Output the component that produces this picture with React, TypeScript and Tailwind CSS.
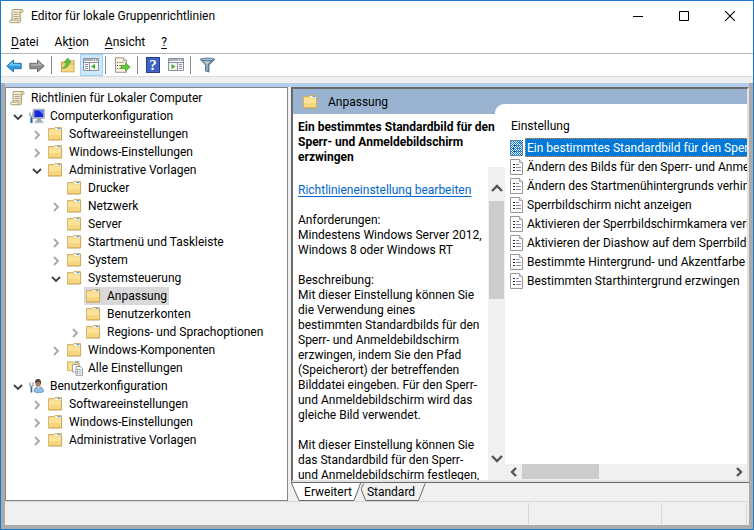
import React from "react";

type IconName = "scroll" | "computer" | "user" | "folder" | "all";

function FolderIcon() {
  return (
    <svg width="16" height="16" viewBox="0 0 16 16" className="shrink-0">
      <path d="M.5 2.500h5.500L7 1.500h6.500v12H.5z" fill="#f4d88e" stroke="#cdab62" strokeWidth=".9" />
      <path d="M7.500 2h5.500v2H7.500z" fill="#fff6dc" />
      <path d="M9.500 2h3v1.200h-3z" fill="#5aa2dc" />
      <path d="M.9 4.200h6l.8.8h5.500v8.500H.9z" fill="#fde299" />
      <path d="M.9 9h12.300v4.500H.9z" fill="#f7d680" />
      <path d="M.3 14h13.400" stroke="#bd9440" strokeWidth=".9" />
      <path d="M13.600 3v11" stroke="#c9a250" strokeWidth=".7" />
    </svg>
  );
}

function ScrollIcon() {
  return (
    <svg width="16" height="16" viewBox="0 0 16 16" className="shrink-0">
      <path d="M3.500 1.500h9.500c1.300 0 1.500 2.600.2 2.800h-1.600v8.700c0 1.300-.8 1.700-1.700 1.700H1.500c-1.300 0-1.300-2.400 0-2.600H3V4z" fill="#f5edcf" stroke="#a2946c" strokeWidth=".9" />
      <path d="M11.600 4.300c-.9-.5-.7-2.400.6-2.600M3 12.100h6.200c-.4.9-.2 1.900.5 2.300" fill="none" stroke="#a2946c" strokeWidth=".8" />
      <path d="M10.600 3v9.500" stroke="#d9ca99" strokeWidth="1.200" />
      <path d="M4.500 4.500h5M4.500 6.500h5M4.500 8.500h5M4.500 10.500h5" stroke="#99958a" strokeWidth=".8" />
    </svg>
  );
}

function ComputerIcon() {
  return (
    <svg width="16" height="16" viewBox="0 0 16 16" className="shrink-0">
      <path d="M4.300 1.300h11v9h-11z" fill="#dfe3e8" stroke="#8791a0" strokeWidth=".8" />
      <path d="M5.300 2.300h9v7h-9z" fill="#1426d6" />
      <path d="M9.500 2.300h4.800v4.500z" fill="#5c8cf4" />
      <path d="M8.500 10.500h3l1.500 3H7z" fill="#9ba3ad" />
      <path d="M6 13.300h8v1.400H6z" fill="#c5cad0" stroke="#8c939d" strokeWidth=".5" />
      <path d="M1 4.500v3l1.400 1.200L4 7.500v-3M2.500 8v2" fill="none" stroke="#8696a8" strokeWidth="1.200" />
      <path d="M1.400 9.500h2.200V15H1.400z" fill="#2c62ad" />
    </svg>
  );
}

function UserIcon() {
  return (
    <svg width="16" height="16" viewBox="0 0 16 16" className="shrink-0">
      <path d="M5 13.500c0-3.500 2-5 4.500-5s5 1.700 5 5c-2.500 1.700-7 1.700-9.500 0z" fill="#8fbbe8" stroke="#5d8bbd" strokeWidth=".7" />
      <path d="M7.800 8.300l1.600 2 1.800-2z" fill="#fff" />
      <ellipse cx="9" cy="5.400" rx="2.600" ry="3.300" fill="#b07a56" />
      <path d="M6.300 5C5.600 1.800 7.600.8 9.300 1c2.400.2 3.200 2.200 2.500 5.700-1-.5-.6-2.600-1.700-3.200z" fill="#4b3f3b" />
      <path d="M1 4.500v3l1.400 1.200L4 7.500v-3" fill="none" stroke="#8696a8" strokeWidth="1.200" />
      <path d="M1.500 9h1.800v5.500H1.500z" fill="#416d9e" />
    </svg>
  );
}

function AllIcon() {
  return (
    <svg width="17" height="16" viewBox="0 0 17 16" className="-mr-px shrink-0">
      <path d="M.5 1.800h6l1 1h4.800v8H.5z" fill="#fbdf92" stroke="#cfae66" strokeWidth=".9" />
      <path d="M8 1.300h4v1.200H8z" fill="#4a9bdd" />
      <path d="M5.500 4.500h5l1.500 1.500v6H5.500z" fill="#fff" stroke="#8d8d8d" strokeWidth=".8" />
      <path d="M9 6.500h4.500l2 2v6.800H9z" fill="#fff" stroke="#7f7f7f" strokeWidth=".8" />
      <path d="M10.300 9.500h1M10.300 11.300h1M10.300 13.200h1" stroke="#333" />
      <path d="M12 9.500h2.300M12 11.300h2.300M12 13.200h2.300" stroke="#8f8fa8" strokeWidth=".8" />
    </svg>
  );
}

const icons: Record<IconName, () => React.ReactElement> = {
  scroll: ScrollIcon,
  computer: ComputerIcon,
  user: UserIcon,
  folder: FolderIcon,
  all: AllIcon,
};

function SettingIcon({ selected }: { selected: boolean }) {
  return (
    <svg width="14" height="16" viewBox="0 0 14 16" className="shrink-0">
      <defs>
        <pattern id="dither" width="2" height="2" patternUnits="userSpaceOnUse">
          <path d="M0 0h1v1H0zM1 1h1v1H1z" fill="#0078d7" />
        </pattern>
      </defs>
      <path d="M.5 .5H9.500L12.500 3.500v12H.5z" fill="#fff" stroke="#979797" />
      <path d="M9.500 .5V3.500H12.500" fill="#e8e8e8" stroke="#a5a5a5" />
      <path d="M3 5h2v1H3zM3 8h2v1H3zM3 11h2v1H3z" fill="#222" />
      <path d="M6 5h3v1H6zM6 8h5v1H6zM6 11h5v1H6z" fill="#8f86a8" />
      {selected && <path d="M0 0h13v16H0z" fill="url(#dither)" />}
    </svg>
  );
}

function Chevron({ open }: { open: boolean }) {
  return (
    <svg width="10" height="10" viewBox="0 0 10 10" className="mt-[2px]">
      {open ? (
        <path d="M1 3l4 4 4-4" fill="none" stroke="#404040" strokeWidth="1.800" />
      ) : (
        <path d="M3 1l4 4-4 4" fill="none" stroke="#a6a6a6" strokeWidth="1.800" />
      )}
    </svg>
  );
}

type Node = { level: number; label: string; icon: IconName; open?: boolean; selected?: boolean };

const tree: Node[] = [
  { level: 0, label: "Richtlinien für Lokaler Computer", icon: "scroll" },
  { level: 1, label: "Computerkonfiguration", icon: "computer", open: true },
  { level: 2, label: "Softwareeinstellungen", icon: "folder", open: false },
  { level: 2, label: "Windows-Einstellungen", icon: "folder", open: false },
  { level: 2, label: "Administrative Vorlagen", icon: "folder", open: true },
  { level: 3, label: "Drucker", icon: "folder" },
  { level: 3, label: "Netzwerk", icon: "folder", open: false },
  { level: 3, label: "Server", icon: "folder" },
  { level: 3, label: "Startmenü und Taskleiste", icon: "folder", open: false },
  { level: 3, label: "System", icon: "folder", open: false },
  { level: 3, label: "Systemsteuerung", icon: "folder", open: true },
  { level: 4, label: "Anpassung", icon: "folder", selected: true },
  { level: 4, label: "Benutzerkonten", icon: "folder" },
  { level: 4, label: "Regions- und Sprachoptionen", icon: "folder", open: false },
  { level: 3, label: "Windows-Komponenten", icon: "folder", open: false },
  { level: 3, label: "Alle Einstellungen", icon: "all" },
  { level: 1, label: "Benutzerkonfiguration", icon: "user", open: true },
  { level: 2, label: "Softwareeinstellungen", icon: "folder", open: false },
  { level: 2, label: "Windows-Einstellungen", icon: "folder", open: false },
  { level: 2, label: "Administrative Vorlagen", icon: "folder", open: false },
];

const indents = ["pl-[2px]", "pl-[2px]", "pl-[21px]", "pl-[40px]", "pl-[59px]"];

function TreeRow({ node }: { node: Node }) {
  const Icon = icons[node.icon];
  return (
    <li role="treeitem" aria-expanded={node.open} aria-selected={!!node.selected} className={`flex h-[18px] ${indents[node.level]}`}>
      {node.level > 0 && (
        <span className="flex w-[19px] shrink-0 items-center justify-center">
          {node.open !== undefined && <Chevron open={node.open} />}
        </span>
      )}
      <button className={`flex items-center gap-[5px] px-[2px] whitespace-nowrap ${node.selected ? "bg-[#d9d9d9]" : ""}`}>
        <Icon />
        <span>{node.label}</span>
      </button>
    </li>
  );
}

const settings = [
  "Ein bestimmtes Standardbild für den Sperr- und Anmeldebildschirm erzwingen",
  "Ändern des Bilds für den Sperr- und Anmeldebildschirm verhindern",
  "Ändern des Startmenühintergrunds verhindern",
  "Sperrbildschirm nicht anzeigen",
  "Aktivieren der Sperrbildschirmkamera verhindern",
  "Aktivieren der Diashow auf dem Sperrbildschirm verhindern",
  "Bestimmte Hintergrund- und Akzentfarbe erzwingen",
  "Bestimmten Starthintergrund erzwingen",
];

function TitleBar() {
  return (
    <header className="flex h-[30px] shrink-0 items-center pl-2">
      <ScrollIcon />
      <h1 className="ml-[6px] flex-1">Editor für lokale Gruppenrichtlinien</h1>
      <button aria-label="Minimieren" className="flex h-full w-[46px] items-center justify-center">
        <svg width="10" height="10"><path d="M0 5h10v1H0z" /></svg>
      </button>
      <button aria-label="Maximieren" className="flex h-full w-[46px] items-center justify-center">
        <svg width="10" height="10"><path d="M.5 .5h9v9h-9z" fill="none" stroke="#000" /></svg>
      </button>
      <button aria-label="Schließen" className="flex h-full w-[46px] items-center justify-center">
        <svg width="10" height="10"><path d="M0 0l10 10M10 0L0 10" stroke="#000" strokeWidth="1.100" /></svg>
      </button>
    </header>
  );
}

function MenuBar() {
  return (
    <nav className="flex h-[22px] shrink-0 items-center gap-4 pl-[10px]">
      <button><u className="underline-offset-2">D</u>atei</button>
      <button>Ak<u className="underline-offset-2">t</u>ion</button>
      <button><u className="underline-offset-2">A</u>nsicht</button>
      <button><u className="underline-offset-2">?</u></button>
    </nav>
  );
}

function Separator() {
  return <span className="h-[18px] w-px bg-[#8a8a8a]" />;
}

function PanelGlyph({ right }: { right?: boolean }) {
  return (
    <svg width="17" height="16" viewBox="0 0 17 16">
      <path d="M.5 1.500h15v12H.5z" fill="#f7f7f7" stroke="#8c929c" />
      <path d="M1 2h14v2H1z" fill="#a9b0ba" />
      <path d="M10 2.500h1v1h-1zM12 2.500h1v1h-1z" fill="#fff" />
      <path d="M1 5.500h14" stroke="#8c929c" />
      {right ? (
        <>
          <path d="M9.500 5.500v8" stroke="#8c929c" />
          <path d="M11 7.500h3M11 9.500h3M11 11.500h3" stroke="#8c929c" />
          <path d="M3.500 7v5l4-2.500z" fill="#3fae2a" />
        </>
      ) : (
        <>
          <path d="M6.500 5.500v8" stroke="#8c929c" />
          <path d="M2 7.500h3M2 9.500h3M2 11.500h3" stroke="#8c929c" />
          <path d="M12 7v5L8 9.500z" fill="#3fae2a" />
        </>
      )}
    </svg>
  );
}

function Toolbar() {
  return (
    <div role="toolbar" aria-label="Symbolleiste" className="flex h-[22px] shrink-0 items-center pl-[5px]">
      <button aria-label="Zurück" className="mr-[7px]">
        <svg width="16" height="16" viewBox="0 0 16 16">
          <path d="M.8 9l6.700-6v3.300h7.700v5.400H7.500V15z" fill="#2b9ce2" stroke="#1d6cab" strokeWidth=".9" strokeLinejoin="round" />
          <path d="M2.500 8.500l4.200-3.700v2.500h7.400v1.500z" fill="#7ccdf6" />
        </svg>
      </button>
      <button aria-label="Vorwärts" className="mr-[6px]">
        <svg width="16" height="16" viewBox="0 0 16 16">
          <path d="M15.200 9L8.500 3v3.300H.8v5.400h7.700V15z" fill="#8d8d8d" stroke="#666" strokeWidth=".9" strokeLinejoin="round" />
          <path d="M13.500 8.500L9.300 4.800v2.500H1.900v1.500z" fill="#b5b5b5" />
        </svg>
      </button>
      <Separator />
      <button aria-label="Eine Ebene nach oben" className="mr-1 ml-2">
        <svg width="16" height="16" viewBox="0 0 16 16">
          <path d="M1.500 5h5l1-1.500h6.500v11.300h-12.500z" fill="#ecc76c" stroke="#c09a49" strokeWidth=".9" />
          <path d="M9.500 4.300h3.500" stroke="#fff" />
          <path d="M2 8h11.500v6.300H2z" fill="#f7d782" />
          <path d="M2.300 11C5.500 10 6.300 7.500 6.300 5.300H4.200L7.700 1l3.500 4.300H9C9 9 6.500 12 2.300 11z" fill="#5bc236" stroke="#379a1b" strokeWidth=".6" />
        </svg>
      </button>
      <button aria-label="Konsolenstruktur" aria-pressed="true" className="mr-[2px] flex h-[22px] w-[23px] items-center justify-center border border-[#99d1ff] bg-[#cce8ff]">
        <PanelGlyph />
      </button>
      <Separator />
      <button aria-label="Liste exportieren" className="mr-[6px] ml-2">
        <svg width="17" height="16" viewBox="0 0 17 16">
          <path d="M1.500 .8h8l3 3v11.500h-11z" fill="#fcf6df" stroke="#8f8b7e" strokeWidth=".9" />
          <path d="M9.500 .8v3h3" fill="#ddd" stroke="#8f8b7e" strokeWidth=".7" />
          <path d="M3 5.500h1M3 8.500h1M3 11.500h1" stroke="#444" />
          <path d="M5 5.500h5M5 8.500h3M5 11.500h3" stroke="#a29faa" />
          <path d="M7 8.500h4.500V6l4.700 4-4.700 4v-2.500H7z" fill="#65ca3d" stroke="#39981d" strokeWidth=".7" />
        </svg>
      </button>
      <Separator />
      <button aria-label="Hilfe" className="mr-2 ml-2 flex h-4 w-[14px] items-center justify-center border border-[#243d8e] bg-[#3e61c4] font-['Liberation_Serif',serif] text-[15px] leading-4 font-bold text-white">
        ?
      </button>
      <button aria-label="Aktionsbereich" className="mr-[5px]">
        <PanelGlyph right />
      </button>
      <Separator />
      <button aria-label="Filter" className="ml-2">
        <svg width="17" height="16" viewBox="0 0 17 16">
          <path d="M1.500 2.500l5 5.500v6l3.500 1V8l5.500-5.500z" fill="#6e8ba4" stroke="#4c6479" strokeWidth=".8" />
          <path d="M7.500 8v5.500l1 .3V7.500l3-3.500h-7z" fill="#b5cad9" />
          <ellipse cx="8.500" cy="2.400" rx="7.300" ry="1.300" fill="#a5bdd0" stroke="#4c6479" strokeWidth=".8" />
        </svg>
      </button>
    </div>
  );
}

function ScrollArrow({ d, label, className }: { d: string; label: string; className: string }) {
  return (
    <button aria-label={label} className={`flex shrink-0 items-center justify-center ${className}`}>
      <svg width="12" height="12" viewBox="0 0 12 12">
        <path d={d} fill="none" stroke="#555" strokeWidth="2.400" />
      </svg>
    </button>
  );
}

function Description() {
  return (
    <section className="flex w-[212px] shrink-0 flex-col overflow-hidden leading-[15px] whitespace-nowrap">
      <h3 className="pt-[6px] pl-[5px] font-bold">
        Ein bestimmtes Standardbild für den<br />
        Sperr- und Anmeldebildschirm<br />
        erzwingen
      </h3>
      <div className="mt-[2px] flex min-h-0 flex-1">
        <div className="min-w-0 flex-1 overflow-hidden pt-4 pl-[5px]">
          <a href="#bearbeiten" className="text-[#0066cc] underline underline-offset-2">Richtlinieneinstellung bearbeiten</a>
          <p className="mt-[15px]">
            Anforderungen:<br />
            Mindestens Windows Server 2012,<br />
            Windows 8 oder Windows RT
          </p>
          <p className="mt-[15px]">
            Beschreibung:<br />
            Mit dieser Einstellung können Sie<br />
            die Verwendung eines<br />
            bestimmten Standardbilds für den<br />
            Sperr- und Anmeldebildschirm<br />
            erzwingen, indem Sie den Pfad<br />
            (Speicherort) der betreffenden<br />
            Bilddatei eingeben. Für den Sperr-<br />
            und Anmeldebildschirm wird das<br />
            gleiche Bild verwendet.
          </p>
          <p className="mt-[15px]">
            Mit dieser Einstellung können Sie<br />
            das Standardbild für den Sperr-<br />
            und Anmeldebildschirm festlegen,
          </p>
        </div>
        <div className="flex w-[17px] shrink-0 flex-col bg-[#f0f0f0] px-px">
          <ScrollArrow label="Nach oben" d="M1 9l5-5 5 5" className="h-[34px] pt-2" />
          <div className="h-[98px] bg-[#cdcdcd]" />
          <div className="flex-1" />
          <ScrollArrow label="Nach unten" d="M1 3l5 5 5-5" className="h-[42px]" />
        </div>
      </div>
    </section>
  );
}

function SettingsList() {
  return (
    <section className="flex min-w-0 flex-1 flex-col">
      <div className="h-6 shrink-0 pl-[6px] leading-6">Einstellung</div>
      <ul className="min-h-0 flex-1 overflow-hidden pl-[5px]">
        {settings.map((s, i) => (
          <li key={s}>
            <button className="flex h-[19px] w-full items-center gap-px whitespace-nowrap">
              <SettingIcon selected={i === 0} />
              <span
                className={`h-[19px] flex-1 overflow-hidden border border-r-0 pl-px text-left leading-[19px] ${
                  i === 0 ? "border-dotted border-[#ff8728] bg-[#0078d7] text-white" : "border-transparent"
                }`}
              >
                {s}
              </span>
            </button>
          </li>
        ))}
      </ul>
      <div className="flex h-4 shrink-0 items-stretch bg-[#f0f0f0] pb-px">
        <ScrollArrow label="Nach links" d="M8 2L4 6l4 4" className="w-[17px]" />
        <div className="w-[77px] bg-[#cdcdcd]" />
        <div className="flex-1" />
        <ScrollArrow label="Nach rechts" d="M4 2l4 4-4 4" className="w-[17px]" />
      </div>
    </section>
  );
}

function ViewTab({ label, active, className }: { label: string; active?: boolean; className: string }) {
  return (
    <button role="tab" aria-selected={!!active} className={`relative flex h-[18px] items-center justify-center ${className}`}>
      <svg viewBox="0 0 70 18" preserveAspectRatio="none" className="absolute inset-0 h-full w-full">
        <path
          d={active ? "M0 -1L8 17.500H63L70 -1" : "M3 .5L0 6L5 17.500H61L68 .5"}
          fill={active ? "#fff" : "#f0f0f0"}
          stroke="#696969"
          vectorEffect="non-scaling-stroke"
        />
      </svg>
      <span className="relative">{label}</span>
    </button>
  );
}

export default function App() {
  return (
    <div className="flex h-screen flex-col overflow-hidden border border-[#1979ca] bg-white font-['Roboto','Noto_Sans',sans-serif] text-[12px] leading-[18px] text-black">
      <TitleBar />
      <MenuBar />
      <div className="border-t border-b border-t-[#b0b3bc] border-b-[#dcdcdc]">
        <Toolbar />
      </div>
      <div className="h-[6px] shrink-0 bg-[#f0f0f0]" />
      <main className="flex min-h-0 flex-1 flex-col border-4 border-t-0 border-[#ababab] bg-[#f0f0f0]">
        <div className="h-1 shrink-0 bg-[#b4cdea]" />
        <div className="flex min-h-0 flex-1 gap-[3px]">
          <ul role="tree" className="w-[283px] shrink-0 overflow-hidden border border-[#828790] bg-white pt-px">
            {tree.map((node, i) => (
              <TreeRow key={i} node={node} />
            ))}
          </ul>
          <div className="flex min-w-0 flex-1 flex-col">
            <div className="flex min-h-0 flex-1 flex-col border-2 border-[#696969] border-r-[#e3e3e3] border-b-[#e3e3e3] bg-white">
              <div className="flex h-[25px] shrink-0 bg-[#99b3d1]">
                <div className="flex w-[202px] shrink-0 items-center gap-[9px] pl-[10px]">
                  <FolderIcon />
                  <h2>Anpassung</h2>
                </div>
                <div className="h-[10px] flex-1 self-end rounded-tl-[9px] bg-white" />
              </div>
              <div className="flex min-h-0 flex-1">
                <Description />
                <SettingsList />
              </div>
            </div>
            <div role="tablist" className="flex h-[19px] shrink-0 border-t border-[#696969]">
              <ViewTab label="Erweitert" active className="w-[70px] pl-1" />
              <ViewTab label="Standard" className="w-[66px] pr-[6px]" />
            </div>
          </div>
        </div>
        <footer className="flex h-6 shrink-0 border-t border-[#d7d7d7] py-px">
          <div className="flex-1 border-r border-[#d7d7d7]" />
          <div className="w-[133px] border-r border-[#d7d7d7]" />
          <div className="mr-[2px] w-[85px] border-r border-[#d7d7d7]" />
        </footer>
      </main>
    </div>
  );
}
